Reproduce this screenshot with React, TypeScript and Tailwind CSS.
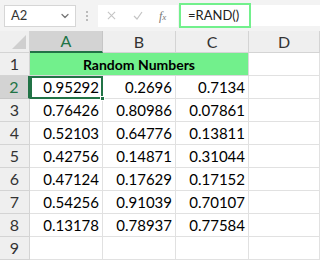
import { ChevronDown } from "lucide-react"

const rows = [
  ["0.95292", "0.2696", "0.7134"],
  ["0.76426", "0.80986", "0.07861"],
  ["0.52103", "0.64776", "0.13811"],
  ["0.42756", "0.14871", "0.31044"],
  ["0.47124", "0.17629", "0.17152"],
  ["0.54256", "0.91039", "0.70107"],
  ["0.13178", "0.78937", "0.77584"],
]

const font = { fontFamily: "Lato, 'Open Sans', sans-serif" }

export default function App() {
  return (
    <div className="h-[262px] w-[320px] overflow-hidden bg-white" style={font}>
      {/* formula bar */}
      <div className="flex h-[31px] items-center bg-[#f3f3f3] pl-1">
        <div className="flex h-[22px] w-[72px] items-center justify-between border border-[#d6d6d6] bg-white pl-[6px] pr-[4px] text-[13px] text-[#333]">
          <span>A2</span>
          <ChevronDown className="h-3 w-3 text-[#777]" strokeWidth={2.5} />
        </div>
        <div className="ml-[10px] flex w-[3px] flex-col gap-[2px]">
          <div className="h-[2px] w-[2px] bg-[#bbb]" />
          <div className="h-[2px] w-[2px] bg-[#bbb]" />
          <div className="h-[2px] w-[2px] bg-[#bbb]" />
        </div>
        <div className="ml-[9px] flex h-[22px] w-[80px] items-center bg-white text-[#c4c4c4]">
          <svg className="ml-[9px] h-[9px] w-[9px]" viewBox="0 0 10 10" fill="none" stroke="currentColor" strokeWidth="1.2">
            <path d="M1 1l8 8M9 1l-8 8" />
          </svg>
          <svg className="ml-[17px] h-[9px] w-[10px]" viewBox="0 0 10 9" fill="none" stroke="currentColor" strokeWidth="1.2">
            <path d="M1 5l3 3 5-7" />
          </svg>
          <span className="ml-[16px] text-[12px] italic text-[#777]" style={{ fontFamily: "'Liberation Serif', serif" }}>
            f<span className="text-[9px]">x</span>
          </span>
        </div>
        <div className="ml-[1px] flex h-[25px] w-[72px] items-center border-2 border-[#72f08c] bg-white pl-[7px] text-[13px] text-[#222]">
          =RAND()
        </div>
        <div className="h-[21px] flex-1 bg-white" />
      </div>

      {/* grid */}
      <div className="grid grid-cols-[30px_73px_73px_73px_71px] grid-rows-[22px_23px_23px_23px_23px_23px_23px_23px_23px_23px]">
        {/* column headers */}
        <div className="relative border-r border-b border-[#d4d4d4] bg-[#efefef]">
          <div className="absolute right-[3px] bottom-[3px] h-0 w-0" style={{ borderBottom: "14px solid #cfcfcf", borderLeft: "14px solid transparent" }} />
        </div>
        <div className="flex items-center justify-center border-r border-b-2 border-r-[#c6c6c6] border-b-[#217346] bg-[#d3d3d3] text-[16px] text-[#217346]">A</div>
        {["B", "C", "D"].map((c) => (
          <div key={c} className="flex items-center justify-center border-r border-b border-[#d4d4d4] bg-[#efefef] text-[16px] text-[#333]">
            {c}
          </div>
        ))}

        {/* row 1 */}
        <div className="flex items-center justify-center border-r border-b border-[#d4d4d4] bg-[#efefef] text-[16px] text-[#333]">1</div>
        <div className="col-span-3 flex items-center justify-center border-r border-b border-[#d9d9d9] bg-[#72f08c] text-[14px] font-bold text-black">
          Random Numbers
        </div>
        <div className="border-r border-b border-[#e1e1e1]" />

        {/* data rows */}
        {rows.map((r, i) => {
          const n = i + 2
          const sel = n === 2
          return [
            <div
              key={`h${n}`}
              className={`flex items-center justify-center border-b text-[16px] ${sel ? "border-r-2 border-r-[#217346] border-b-[#c6c6c6] bg-[#d3d3d3] text-[#217346]" : "border-r border-[#d4d4d4] bg-[#efefef] text-[#333]"}`}
            >
              {n}
            </div>,
            ...r.map((v, j) =>
              sel && j === 0 ? (
                <div key={`c${n}${j}`} className="relative flex items-center justify-end border-2 border-[#217346] pr-[2px] text-[15px] text-black">
                  {v}
                  <div className="absolute -right-[4px] -bottom-[4px] h-[5px] w-[5px] border border-white bg-[#217346]" />
                </div>
              ) : (
                <div key={`c${n}${j}`} className="flex items-center justify-end border-r border-b border-[#e1e1e1] pr-[3px] text-[15px] text-black">
                  {v}
                </div>
              )
            ),
            <div key={`d${n}`} className="border-r border-b border-[#e1e1e1]" />,
          ]
        })}

        {/* row 9 */}
        <div className="flex items-center justify-center border-r border-b border-[#d4d4d4] bg-[#efefef] text-[16px] text-[#333]">9</div>
        <div className="border-r border-b border-[#e1e1e1]" />
        <div className="border-r border-b border-[#e1e1e1]" />
        <div className="border-r border-b border-[#e1e1e1]" />
        <div className="border-r border-b border-[#e1e1e1]" />
      </div>
    </div>
  )
}
